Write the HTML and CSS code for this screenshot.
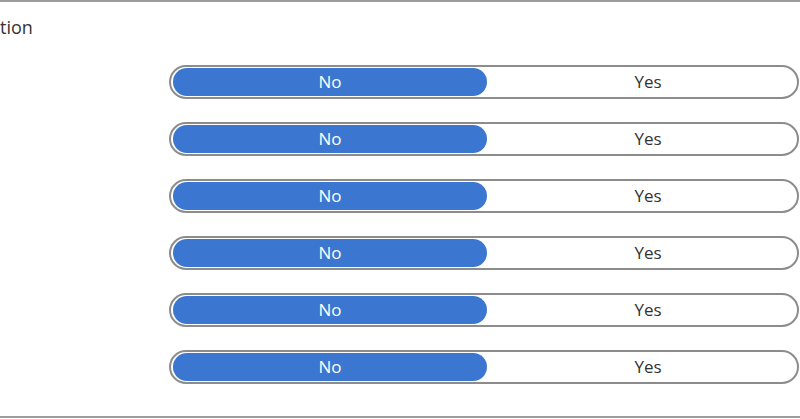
FILE: index.html
```html
<!DOCTYPE html>
<html lang="en">
<head>
  <meta charset="UTF-8" />
  <title>Toggles</title>
  <link rel="stylesheet" href="styles.css">
</head>
<body>
  <div class="panel">
    <div class="heading">tion</div>

    <div class="list">
      <div class="toggle"><span class="opt on">No</span><span class="opt">Yes</span></div>
      <div class="toggle"><span class="opt on">No</span><span class="opt">Yes</span></div>
      <div class="toggle"><span class="opt on">No</span><span class="opt">Yes</span></div>
      <div class="toggle"><span class="opt on">No</span><span class="opt">Yes</span></div>
      <div class="toggle"><span class="opt on">No</span><span class="opt">Yes</span></div>
      <div class="toggle"><span class="opt on">No</span><span class="opt">Yes</span></div>
    </div>
  </div>
</body>
</html>
```

FILE: styles.css
```css
* {
  box-sizing: border-box;
}
body {
  margin: 0;
  font-family: "Open Sans", "Noto Sans", sans-serif;
  color: #333;
  background: #fff;
  overflow: hidden;
}
.panel {
  height: 418px;
  border-top: 2px solid #9c9c9c;
  border-bottom: 2px solid #9c9c9c;
}
.heading {
  padding-top: 13px;
  font-size: 18px;
  line-height: 24px;
}
.list {
  margin: 26px 0 0 169px;
  display: flex;
  flex-direction: column;
  gap: 23px;
}
.toggle {
  display: flex;
  width: 630px;
  height: 34px;
  padding: 1px 2px;
  border: 2px solid #8c8c8c;
  border-radius: 17px;
}
.opt {
  flex: 1;
  text-align: center;
  font-size: 17px;
  line-height: 27px;
  padding-left: 14px;
}
.opt.on {
  flex: none;
  width: 314px;
  padding-left: 0;
  background: #3b77d0;
  color: #fff;
  border-radius: 14px;
}
```
